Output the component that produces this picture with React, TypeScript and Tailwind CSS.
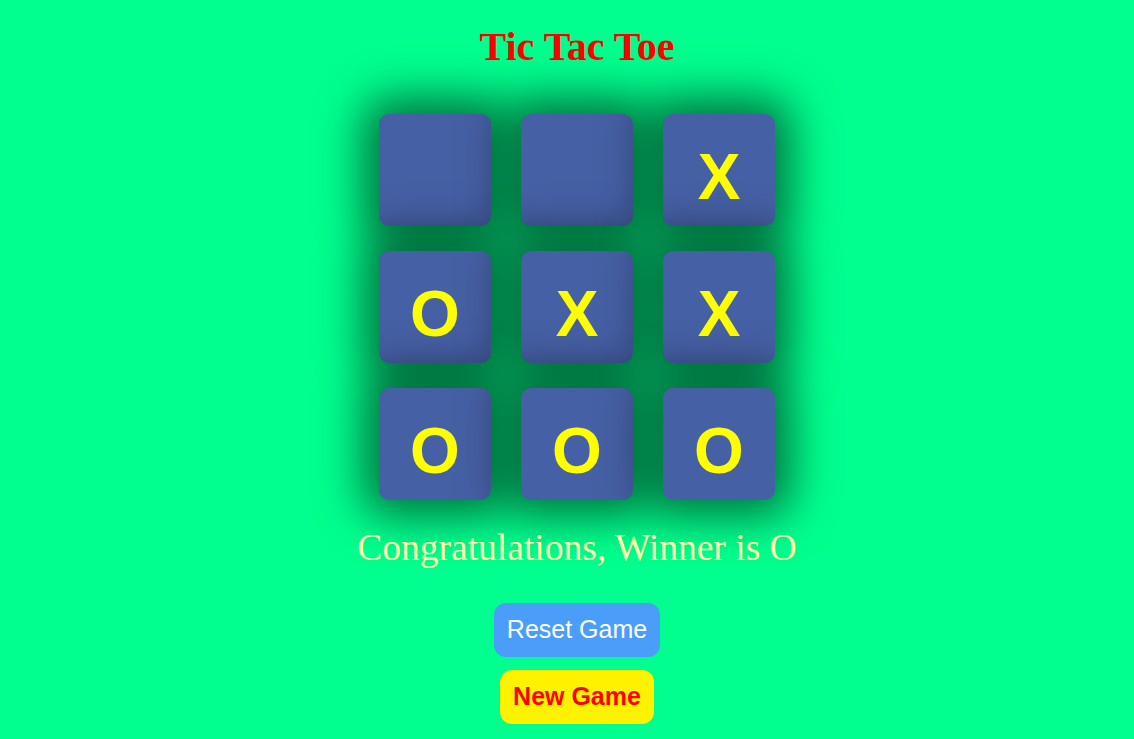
import React, { useState } from "react";

const initialBoard = ["", "", "X", "O", "X", "X", "O", "O", "O"];

const Square = ({ value }: { value: string }) => (
  <div className="flex h-[112px] w-[112px] items-center justify-center rounded-[10px] bg-[#4660a5] font-['Liberation_Sans',Arial,sans-serif] text-[64px] font-bold leading-none text-[#ffff00] shadow-[0_0_45px_16px_rgba(0,0,0,0.55)]">
    <span className="mt-[14px]">{value}</span>
  </div>
);

export default function App() {
  const [board] = useState<string[]>(initialBoard);

  return (
    <div className="min-h-[739px] bg-[#00ff8e] pl-[20px]">
      <div className="flex flex-col items-center">
        <h1 className="mt-[24px] font-['Liberation_Serif','Times_New_Roman',serif] text-[40px] font-bold leading-[46px] text-[#ff0000]">
          Tic Tac Toe
        </h1>
        <div className="mt-[44px] grid grid-cols-[112px_112px_112px] gap-x-[30px] gap-y-[25px]">
          {board.map((v, i) => (
            <Square key={i} value={v} />
          ))}
        </div>
        <p className="mt-[24px] font-['Liberation_Serif','Times_New_Roman',serif] text-[37.5px] leading-[48px] text-[#ffffaa]">
          Congratulations, Winner is O
        </p>
        <button className="mt-[31px] h-[54px] rounded-[12px] bg-[#4a9df8] px-[13px] font-['Liberation_Sans',Arial,sans-serif] text-[25px] text-white">
          Reset Game
        </button>
        <button className="mt-[13px] h-[54px] rounded-[12px] bg-[#fff200] px-[13px] font-['Liberation_Sans',Arial,sans-serif] text-[25px] font-bold text-[#ff0000]">
          New Game
        </button>
      </div>
    </div>
  );
}
